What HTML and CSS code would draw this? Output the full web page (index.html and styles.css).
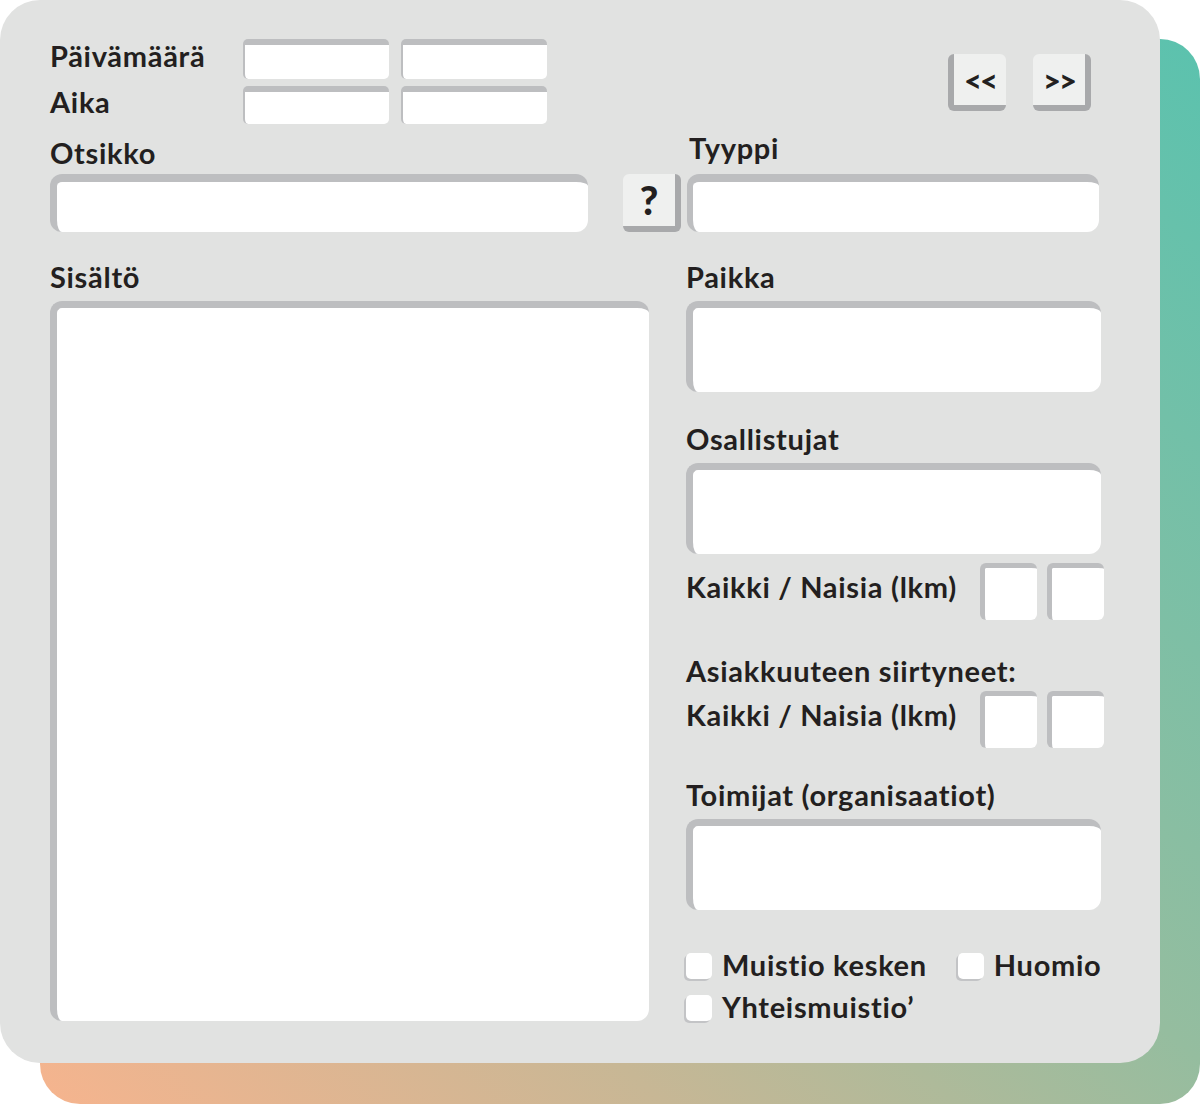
FILE: index.html
```html
<!DOCTYPE html>
<html lang="fi">
<head>
    <meta charset="UTF-8">
    <meta name="viewport" content="width=device-width, initial-scale=1.0">
    <title>Muistio</title>
    <link rel="stylesheet" href="styles.css">
</head>
<body>
<div class="stage">
    <div class="card">
        <div class="head">
            <div class="when">
                <span class="label">Päivämäärä</span>
                <span class="field field-sm"></span>
                <span class="field field-sm"></span>
                <span class="label">Aika</span>
                <span class="field field-sm"></span>
                <span class="field field-sm"></span>
            </div>
            <div class="nav">
                <button type="button" class="key key-prev">&lt;&lt;</button>
                <button type="button" class="key key-next">&gt;&gt;</button>
            </div>
        </div>

        <div class="title-row">
            <div class="label label-otsikko">Otsikko</div>
            <div class="label label-tyyppi">Tyyppi</div>
            <div class="field field-line field-otsikko"></div>
            <button type="button" class="key key-help">?</button>
            <div class="field field-line field-tyyppi"></div>
        </div>

        <div class="main">
            <div class="col-left">
                <div class="label">Sisältö</div>
                <div class="field field-body"></div>
            </div>

            <div class="col-right">
                <div class="label">Paikka</div>
                <div class="field field-box"></div>

                <div class="label label-gap">Osallistujat</div>
                <div class="field field-box"></div>

                <div class="count-row count-first">
                    <span class="label">Kaikki / Naisia (lkm)</span>
                    <span class="field field-count"></span>
                    <span class="field field-count"></span>
                </div>

                <div class="label label-sub">Asiakkuuteen siirtyneet:</div>
                <div class="count-row count-second">
                    <span class="label">Kaikki / Naisia (lkm)</span>
                    <span class="field field-count"></span>
                    <span class="field field-count"></span>
                </div>

                <div class="label label-gap">Toimijat (organisaatiot)</div>
                <div class="field field-box"></div>

                <div class="checks">
                    <div class="check-row">
                        <label class="check"><span class="tick"></span>Muistio kesken</label>
                        <label class="check"><span class="tick"></span>Huomio</label>
                    </div>
                    <div class="check-row">
                        <label class="check"><span class="tick"></span>Yhteismuistio’</label>
                    </div>
                </div>
            </div>
        </div> <!-- End main -->
    </div>
</div>
</body>
</html>
```

FILE: styles.css
```css
body {
    margin: 0;
    background: #ffffff;
    font-family: Lato, "Liberation Sans", sans-serif;
    color: #231f20;
}

.stage {
    position: relative;
    width: 1200px;
    height: 1104px;
}

/* coloured sheet behind the card */
.stage::before {
    content: "";
    position: absolute;
    left: 40px;
    top: 39px;
    right: 0;
    bottom: 0;
    border-radius: 40px;
    background: linear-gradient(to top right, #f6b48e 0%, #c7b795 27%, #95bd9f 52%, #5bc2ae 100%);
}

.card {
    position: relative;
    width: 1160px;
    height: 1063px;
    box-sizing: border-box;
    padding: 39px 56px 0 50px;
    background: #e1e2e1;
    border-radius: 40px;
}

.label {
    display: block;
    font-size: 29px;
    font-weight: 700;
    letter-spacing: 0.7px;
    line-height: 32px;
    white-space: nowrap;
}

.field {
    display: block;
    box-sizing: border-box;
    background: #ffffff;
    border-top: 7px solid #bdbec0;
    border-left: 7px solid #bdbec0;
    border-radius: 12px;
}

/* header */
.head {
    display: flex;
    justify-content: space-between;
}

.when {
    display: grid;
    grid-template-columns: 181px 146px 146px;
    grid-template-rows: 40px 38px;
    column-gap: 12px;
    row-gap: 7px;
    align-items: center;
}

.when .label {
    margin-top: -7px;
}

.field-sm {
    height: 100%;
    border-top-width: 6px;
    border-left-width: 2px;
    border-radius: 5px;
}

.nav {
    display: flex;
    gap: 27px;
    margin: 15px 13px 0 0;
}

.key {
    width: 58px;
    height: 57px;
    box-sizing: border-box;
    padding: 0;
    background: #eff0ef;
    border: 0 solid #a8a9ab;
    border-bottom-width: 6px;
    border-radius: 6px;
    font-family: Lato, "Liberation Sans", sans-serif;
    font-weight: 900;
    font-size: 31px;
    letter-spacing: -2px;
    color: #231f20;
}

.key-prev {
    border-left-width: 6px;
}

.key-next,
.key-help {
    border-right-width: 6px;
}

.key-help {
    height: 58px;
    font-size: 40px;
    letter-spacing: 0;
    justify-self: end;
    margin-right: 6px;
}

/* title + type */
.title-row {
    display: grid;
    grid-template-columns: 538px 99px 412px;
    align-items: end;
    margin-top: 8px;
}

.label-otsikko {
    grid-column: 1;
    margin-bottom: 5px;
}

.label-tyyppi {
    grid-column: 3;
    margin: 0 0 10px 2px;
}

.field-line {
    height: 58px;
    border-top-width: 8px;
}

.field-tyyppi {
    border-left-width: 6px;
}

/* two columns */
.main {
    display: grid;
    grid-template-columns: 599px 418px;
    column-gap: 37px;
    margin-top: 29px;
}

.main .label {
    margin-bottom: 8px;
}

.field-body {
    height: 720px;
}

.field-box {
    width: 415px;
    height: 91px;
}

.main .label-gap {
    margin-top: 31px;
}

.count-row {
    display: flex;
    align-items: center;
    gap: 10px;
}

.count-row .label {
    flex: 1;
    margin: 0 0 9px;
}

.count-first {
    margin-top: 9px;
}

.main .label-sub {
    margin: 35px 0 4px;
}

.field-count {
    width: 57px;
    height: 57px;
    border-top-width: 5px;
    border-left-width: 5px;
    border-radius: 6px;
}

.checks {
    margin-top: 38px;
}

.check-row {
    display: flex;
    gap: 31px;
    height: 32px;
    margin-bottom: 10px;
}

.check {
    display: flex;
    align-items: center;
    gap: 10px;
    font-size: 29px;
    font-weight: 700;
    letter-spacing: 0.7px;
}

.tick {
    width: 26px;
    height: 26px;
    margin-top: 4px;
    background: #ffffff;
    border-radius: 5px;
    box-shadow: -2px 2px 0 #c3c4c6;
}
```
